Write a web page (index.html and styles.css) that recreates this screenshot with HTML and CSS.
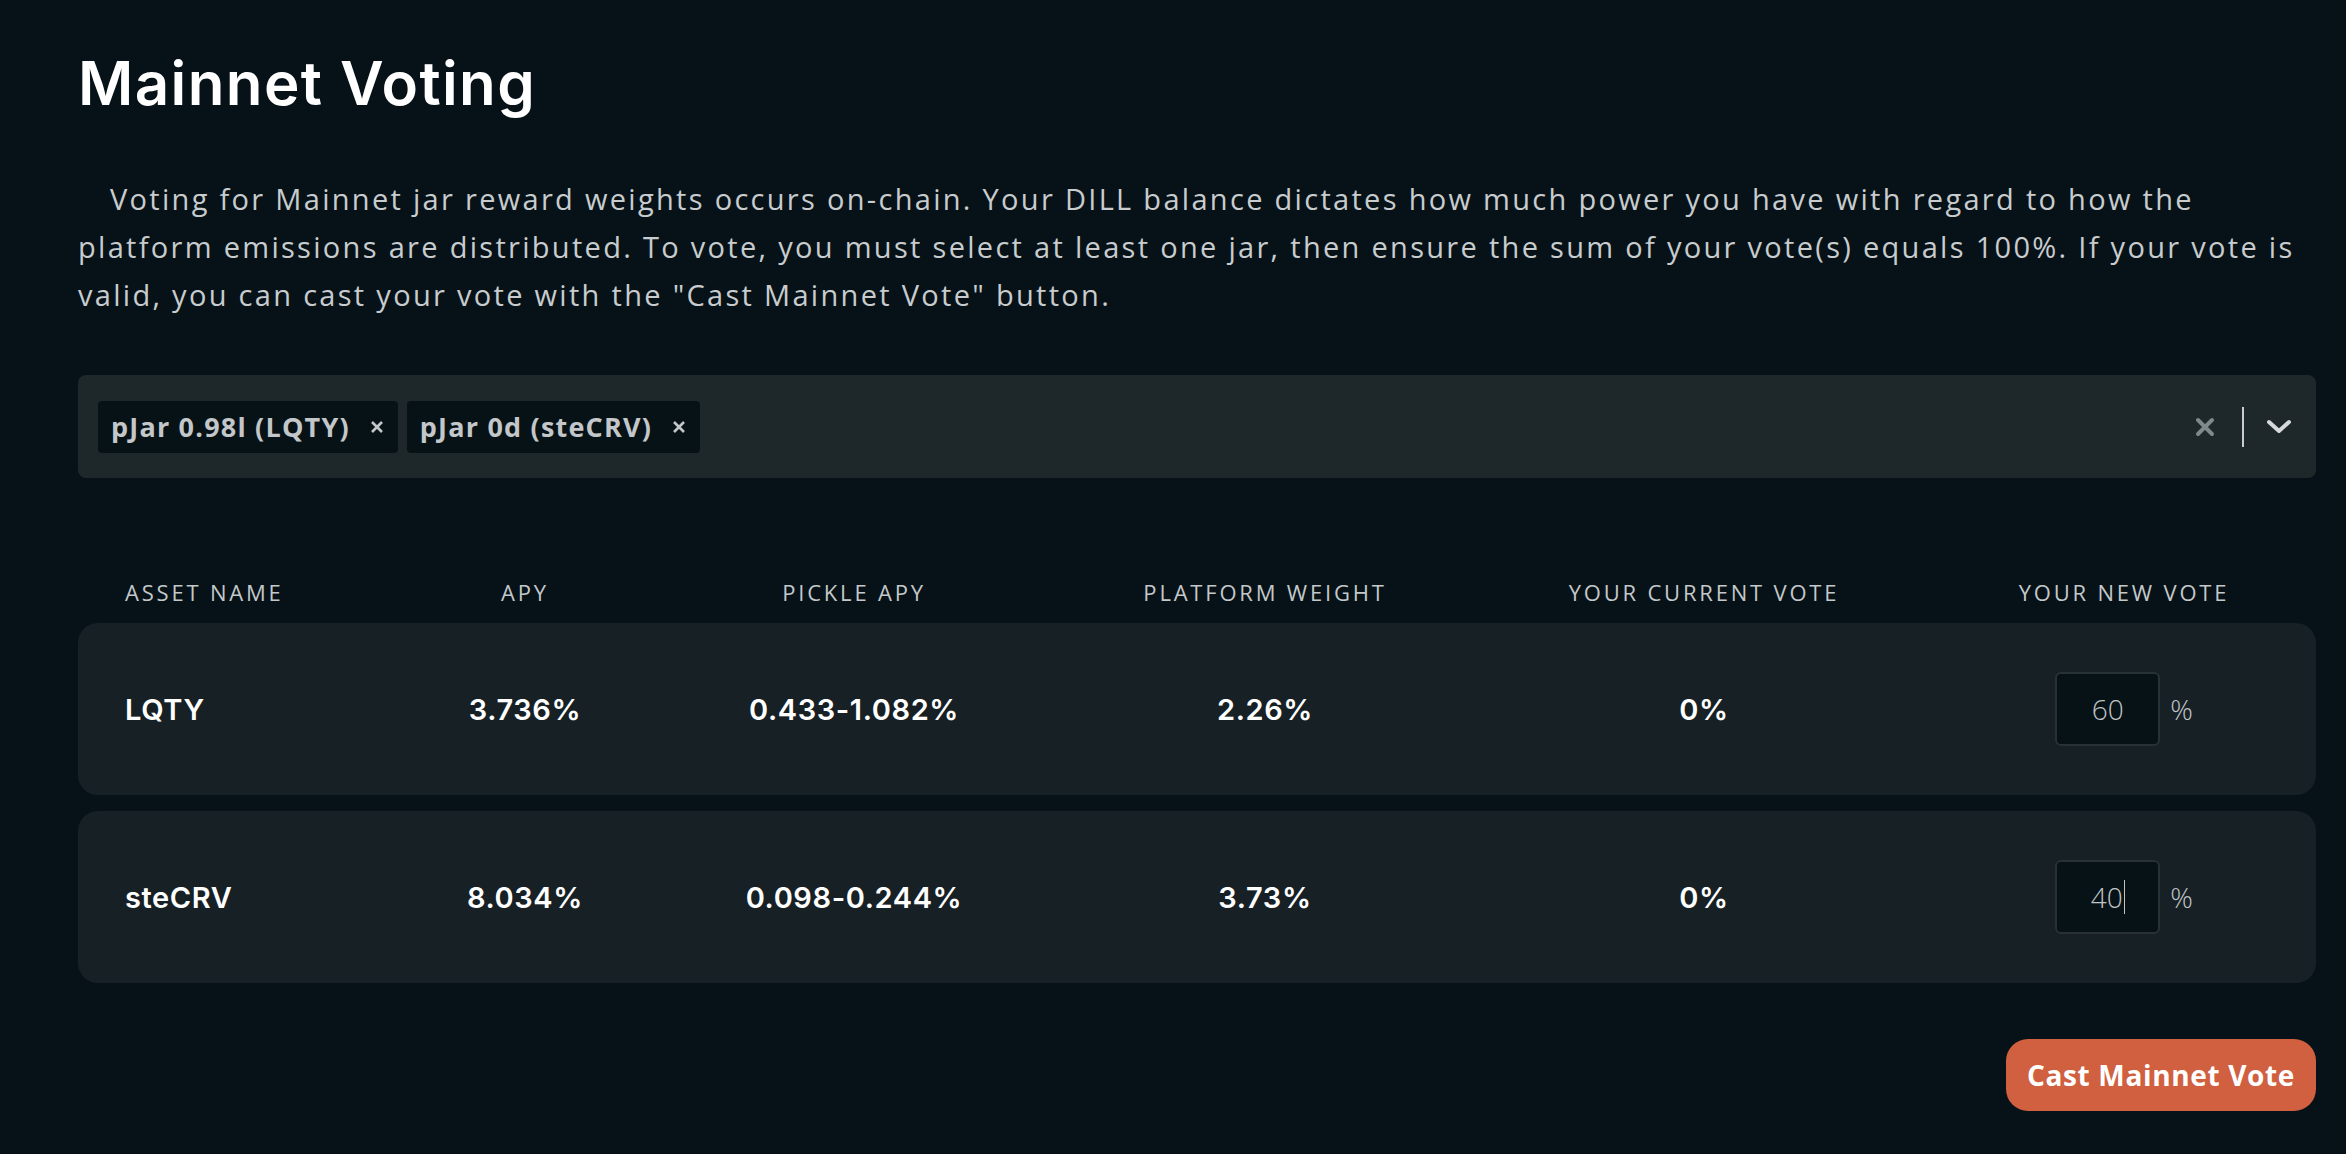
FILE: index.html
```html
<!DOCTYPE html>
<html lang="en">
<head>
<meta charset="utf-8">
<title>Mainnet Voting</title>
<link rel="stylesheet" href="styles.css">
</head>
<body>
<main class="page">
  <h1 class="title">Mainnet Voting</h1>
  <p class="intro">Voting for Mainnet jar reward weights occurs on-chain. Your DILL balance dictates how much power you have with regard to how the platform emissions are distributed. To vote, you must select at least one jar, then ensure the sum of your vote(s) equals 100%. If your vote is valid, you can cast your vote with the "Cast Mainnet Vote" button.</p>

  <div class="select">
    <div class="chips">
      <span class="chip">pJar 0.98l (LQTY)
        <svg class="chip-x" viewBox="0 0 14 14" width="14" height="14"><path d="M2 2 L12 12 M12 2 L2 12"/></svg>
      </span>
      <span class="chip">pJar 0d (steCRV)
        <svg class="chip-x" viewBox="0 0 14 14" width="14" height="14"><path d="M2 2 L12 12 M12 2 L2 12"/></svg>
      </span>
    </div>
    <div class="indicators">
      <svg class="clear" viewBox="0 0 20 20" width="20" height="20"><path d="M3 3 L17 17 M17 3 L3 17"/></svg>
      <span class="sep"></span>
      <svg class="chevron" viewBox="0 0 26 16" width="26" height="16"><path d="M3 3 L13 12 L23 3"/></svg>
    </div>
  </div>

  <div class="table">
    <div class="grid thead">
      <div class="cell first">ASSET NAME</div>
      <div class="cell">APY</div>
      <div class="cell">PICKLE APY</div>
      <div class="cell">PLATFORM WEIGHT</div>
      <div class="cell">YOUR CURRENT VOTE</div>
      <div class="cell last">YOUR NEW VOTE</div>
    </div>
    <div class="rows">
      <div class="grid row">
        <div class="cell first">LQTY</div>
        <div class="cell">3.736%</div>
        <div class="cell">0.433-1.082%</div>
        <div class="cell">2.26%</div>
        <div class="cell">0%</div>
        <div class="cell last vote"><input class="vote-input" type="text" value="60"><span class="pct">%</span></div>
      </div>
      <div class="grid row">
        <div class="cell first">steCRV</div>
        <div class="cell">8.034%</div>
        <div class="cell">0.098-0.244%</div>
        <div class="cell">3.73%</div>
        <div class="cell">0%</div>
        <div class="cell last vote"><span class="vote-input fake">40<span class="caret"></span></span><span class="pct">%</span></div>
      </div>
    </div>
  </div>

  <div class="actions">
    <button class="cast" type="button">Cast Mainnet Vote</button>
  </div>
</main>
</body>
</html>
```

FILE: styles.css
```css
html, body {
  margin: 0;
  background: #061217;
}

.page {
  padding: 47px 30px 0 78px;
}

.title {
  margin: 0;
  font-family: Inter, "Noto Sans", sans-serif;
  font-weight: 600;
  font-size: 60px;
  line-height: 72px;
  letter-spacing: 1.4px;
  color: #ffffff;
}

.intro {
  margin: 56px 0 0;
  font-family: "Open Sans", "Noto Sans", sans-serif;
  font-weight: 400;
  font-size: 29px;
  line-height: 48px;
  letter-spacing: 2.3px;
  text-indent: 32px;
  color: #c8ccce;
}

.select {
  margin-top: 56px;
  height: 103px;
  background: #1e2729;
  border-radius: 8px;
  display: flex;
  align-items: center;
  padding: 0 24px 0 20px;
}

.chips {
  flex: 1;
  display: flex;
  gap: 9px;
}

.chip {
  height: 52px;
  display: flex;
  align-items: center;
  gap: 20px;
  padding: 0 14px 0 13px;
  background: #071216;
  border-radius: 4px;
  font-family: "Open Sans", "Noto Sans", sans-serif;
  font-weight: 700;
  font-size: 27px;
  letter-spacing: 1.2px;
  color: #c3c7c9;
}

.chip-x path {
  stroke: #c3c7c9;
  stroke-width: 2.6;
  fill: none;
}

.indicators {
  display: flex;
  align-items: center;
}

.clear path {
  stroke: #7d898b;
  stroke-width: 4;
  stroke-linecap: round;
  fill: none;
}

.sep {
  width: 2px;
  height: 40px;
  background: #c8cccd;
  margin: 0 22px 0 27px;
}

.chevron path {
  stroke: #d5d9da;
  stroke-width: 4;
  stroke-linecap: round;
  stroke-linejoin: round;
  fill: none;
}

.table {
  margin-top: 99px;
}

.grid {
  display: grid;
  grid-template-columns: 255px 290px 368px 454px 424px 1fr;
  padding-left: 47px;
  align-items: center;
}

.cell {
  text-align: center;
}

.cell.first {
  text-align: left;
}

.cell.last {
  padding-left: 16px;
}

.thead {
  font-family: "Open Sans", "Noto Sans", sans-serif;
  font-weight: 400;
  font-size: 22px;
  line-height: 30px;
  letter-spacing: 2.8px;
  color: #c4c8ca;
}

.rows {
  margin-top: 16px;
  display: flex;
  flex-direction: column;
  gap: 16px;
}

.row {
  height: 172px;
  background: #172025;
  border-radius: 20px;
  font-family: Inter, "Noto Sans", sans-serif;
  font-weight: 600;
  font-size: 29px;
  letter-spacing: 0.6px;
  color: #ffffff;
}

.vote {
  display: flex;
  justify-content: center;
  align-items: center;
  gap: 10px;
  letter-spacing: 0;
}

.vote-input {
  box-sizing: border-box;
  width: 105px;
  height: 74px;
  padding: 0;
  background: #061216;
  border: 2px solid #283133;
  border-radius: 6px;
  color: #c0c4c6;
  font-family: "Open Sans", "Noto Sans", sans-serif;
  font-weight: 300;
  font-size: 28px;
  text-align: center;
  outline: none;
}

.vote-input.fake {
  display: flex;
  align-items: center;
  justify-content: center;
}

.caret {
  display: inline-block;
  width: 1px;
  height: 34px;
  background: #c0c4c6;
  margin-left: 1px;
}

.pct {
  font-family: "Open Sans", "Noto Sans", sans-serif;
  font-weight: 300;
  font-size: 28px;
  color: #c0c4c6;
}

.actions {
  margin-top: 56px;
  display: flex;
  justify-content: flex-end;
}

.cast {
  height: 72px;
  padding: 0 21px;
  background: #d0603f;
  border: none;
  border-radius: 22px;
  font-family: "Open Sans", "Noto Sans", sans-serif;
  font-weight: 700;
  font-size: 28px;
  letter-spacing: 0.65px;
  color: #ffffff;
  cursor: pointer;
}
```
